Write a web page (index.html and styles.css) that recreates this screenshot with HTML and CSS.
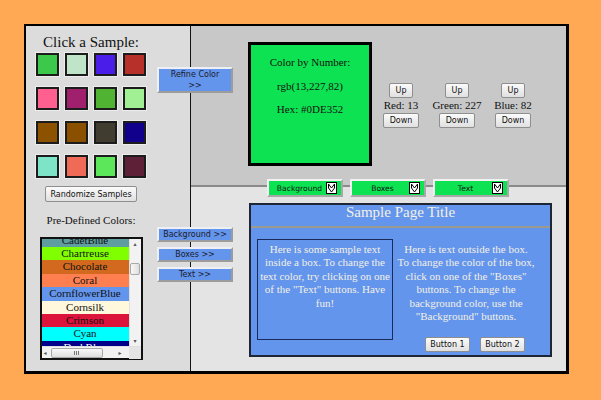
FILE: index.html
```html
<!DOCTYPE html>
<html>
<head>
<meta charset="utf-8">
<link rel="stylesheet" href="styles.css">
</head>
<body>
<div class="frame">
  <aside class="left">
    <div class="left-col">
      <h2 class="heading">Click a Sample:</h2>
      <div class="swatches">
        <div class="swatch" style="background:#3cc84b"></div>
        <div class="swatch" style="background:#c0e4c8"></div>
        <div class="swatch" style="background:#4a1ee8"></div>
        <div class="swatch" style="background:#b8302a"></div>
        <div class="swatch" style="background:#ff6090"></div>
        <div class="swatch" style="background:#a0206e"></div>
        <div class="swatch" style="background:#50b432"></div>
        <div class="swatch" style="background:#a2f094"></div>
        <div class="swatch" style="background:#8c5200"></div>
        <div class="swatch" style="background:#8a5000"></div>
        <div class="swatch" style="background:#403c30"></div>
        <div class="swatch" style="background:#10008c"></div>
        <div class="swatch" style="background:#7ee4c8"></div>
        <div class="swatch" style="background:#f06a58"></div>
        <div class="swatch" style="background:#5ce65a"></div>
        <div class="swatch" style="background:#5e2036"></div>
      </div>
      <button class="btn randomize">Randomize Samples</button>
      <p class="predef">Pre-Defined Colors:</p>
      <div class="listbox">
        <div class="list-main">
          <div class="items">
            <div class="item" style="background:#5f9ea0">CadetBlue</div>
            <div class="item" style="background:#7fff00">Chartreuse</div>
            <div class="item" style="background:#d2691e">Chocolate</div>
            <div class="item" style="background:#ff7f50">Coral</div>
            <div class="item" style="background:#6495ed">CornflowerBlue</div>
            <div class="item" style="background:#fff8dc">Cornsilk</div>
            <div class="item" style="background:#dc143c">Crimson</div>
            <div class="item" style="background:#00ffff">Cyan</div>
            <div class="item item-dark" style="background:#00008b">DarkBlue</div>
          </div>
          <div class="vscroll">
            <span class="arrow">&#9652;</span>
            <span class="vthumb"></span>
            <span class="arrow arrow-down">&#9662;</span>
          </div>
        </div>
        <div class="hscroll">
          <span class="arrow">&#9666;</span>
          <span class="hthumb"><span class="grip"></span></span>
          <span class="arrow arrow-right">&#9656;</span>
          <span class="corner"></span>
        </div>
      </div>
    </div>
  </aside>

  <div class="side-actions">
    <button class="side-btn refine">Refine Color<br>&gt;&gt;</button>
    <div class="side-group">
      <button class="side-btn">Background &gt;&gt;</button>
      <button class="side-btn">Boxes &gt;&gt;</button>
      <button class="side-btn">Text &gt;&gt;</button>
    </div>
  </div>

  <main class="right">
    <section class="top">
      <div class="color-box">
        <p>Color by Number:</p>
        <p>rgb(13,227,82)</p>
        <p>Hex: #0DE352</p>
      </div>
      <div class="channels">
        <div class="channel">
          <button class="btn up">Up</button>
          <span class="ch-label">Red: 13</span>
          <button class="btn down">Down</button>
        </div>
        <div class="channel">
          <button class="btn up">Up</button>
          <span class="ch-label">Green: 227</span>
          <button class="btn down">Down</button>
        </div>
        <div class="channel">
          <button class="btn up">Up</button>
          <span class="ch-label">Blue: 82</span>
          <button class="btn down">Down</button>
        </div>
      </div>
    </section>
    <section class="bottom">
      <div class="selects">
        <div class="select"><span class="sel-text">Background</span><svg class="sel-arrow" width="11" height="12" viewBox="0 0 11 12"><rect x="0.5" y="0.5" width="10" height="11" fill="#fff" stroke="#000"/><polyline points="2.5,2 5.5,6 8.5,2" fill="none" stroke="#000"/><polyline points="2.5,6 5.5,10 8.5,6" fill="none" stroke="#000"/><line x1="2.5" y1="2" x2="2.5" y2="6" stroke="#000"/><line x1="8.5" y1="2" x2="8.5" y2="6" stroke="#000"/></svg></div>
        <div class="select"><span class="sel-text">Boxes</span><svg class="sel-arrow" width="11" height="12" viewBox="0 0 11 12"><rect x="0.5" y="0.5" width="10" height="11" fill="#fff" stroke="#000"/><polyline points="2.5,2 5.5,6 8.5,2" fill="none" stroke="#000"/><polyline points="2.5,6 5.5,10 8.5,6" fill="none" stroke="#000"/><line x1="2.5" y1="2" x2="2.5" y2="6" stroke="#000"/><line x1="8.5" y1="2" x2="8.5" y2="6" stroke="#000"/></svg></div>
        <div class="select"><span class="sel-text">Text</span><svg class="sel-arrow" width="11" height="12" viewBox="0 0 11 12"><rect x="0.5" y="0.5" width="10" height="11" fill="#fff" stroke="#000"/><polyline points="2.5,2 5.5,6 8.5,2" fill="none" stroke="#000"/><polyline points="2.5,6 5.5,10 8.5,6" fill="none" stroke="#000"/><line x1="2.5" y1="2" x2="2.5" y2="6" stroke="#000"/><line x1="8.5" y1="2" x2="8.5" y2="6" stroke="#000"/></svg></div>
      </div>
      <div class="sample">
        <h1 class="sample-title">Sample Page Title</h1>
        <div class="sample-body">
          <div class="sample-box">Here is some sample text inside a box. To change the text color, try clicking on one of the "Text" buttons. Have fun!</div>
          <div class="sample-side">
            <p class="side-text">Here is text outside the box.<br>To change the color of the box,<br>click on one of the "Boxes"<br>buttons. To change the<br>background color, use the<br>"Background" buttons.</p>
            <div class="sample-buttons">
              <button class="btn sbtn">Button 1</button>
              <button class="btn sbtn">Button 2</button>
            </div>
          </div>
        </div>
      </div>
    </section>
  </main>
</div>
</body>
</html>
```

FILE: styles.css
```css
* { box-sizing: border-box; }
html, body { margin: 0; padding: 0; }
body {
  background: #ffa955;
  width: 601px;
  height: 400px;
  overflow: hidden;
  font-family: "Liberation Serif", "Times New Roman", serif;
  color: #111;
}
p, h1, h2 { margin: 0; font-weight: normal; }

.frame {
  position: relative;
  display: flex;
  margin: 24px 0 0 24px;
  width: 545px;
  height: 350px;
  border: 2px solid #000;
  border-right-width: 3px;
  border-bottom-width: 3px;
}

/* left panel */
.left {
  width: 165px;
  height: 100%;
  background: #dcdcdc;
  border-right: 1px solid #141414;
  flex: none;
}
.left-col {
  width: 130px;
  display: flex;
  flex-direction: column;
  align-items: center;
  padding-top: 7px;
}
.heading {
  font-size: 15px;
  line-height: 18px;
  color: #111;
  margin-bottom: 2px;
}
.swatches {
  display: grid;
  grid-template-columns: repeat(4, 23px);
  grid-auto-rows: 23px;
  column-gap: 6px;
  row-gap: 11px;
}
.swatch {
  border: 2px solid #1c1c1c;
  box-shadow: 0 0 0 1px #ededed;
}

.btn {
  font-family: "DejaVu Sans", Verdana, sans-serif;
  font-size: 8px;
  color: #111;
  height: 15px;
  padding: 0;
  border: 1px solid #8e8e8e;
  border-radius: 2px;
  background: linear-gradient(#fbfbfb, #e0e0e0);
  line-height: 13px;
}
.randomize {
  width: 92px;
  height: 16px;
  margin-top: 8px;
}
.predef {
  font-size: 11px;
  line-height: 14px;
  margin-top: 11px;
}

.listbox {
  margin-top: 10px;
  width: 103px;
  height: 123px;
  border: 2px solid #111;
  background: #f0f0f0;
  display: flex;
  flex-direction: column;
}
.list-main {
  display: flex;
  height: 107px;
}
.items {
  width: 87px;
  overflow: hidden;
  background: #fff;
}
.item {
  height: 13.4px;
  line-height: 13.4px;
  font-size: 11px;
  text-align: center;
  color: #111;
}
.item:first-child { margin-top: -5.4px; }
.item-dark { color: #fff; }
.vscroll {
  width: 12px;
  display: flex;
  flex-direction: column;
  align-items: center;
  background: #f2f2f2;
  border-left: 1px solid #e0e0e0;
}
.arrow {
  font-family: "DejaVu Sans", sans-serif;
  font-size: 6px;
  line-height: 10px;
  color: #555;
}
.vthumb {
  margin-top: 14px;
  width: 10px;
  height: 12px;
  border: 1px solid #a8a8a8;
  border-radius: 2px;
  background: linear-gradient(90deg, #f8f8f8, #dedede);
}
.arrow-down { margin-top: auto; }
.hscroll {
  height: 12px;
  display: flex;
  align-items: center;
  background: #f2f2f2;
  border-top: 1px solid #e0e0e0;
  padding-left: 2px;
}
.hthumb {
  margin-left: 4px;
  width: 52px;
  height: 10px;
  border: 1px solid #a8a8a8;
  border-radius: 2px;
  background: linear-gradient(#f8f8f8, #dedede);
  display: flex;
  align-items: center;
  justify-content: center;
}
.grip {
  width: 5px;
  height: 4px;
  background: repeating-linear-gradient(90deg, #777 0 1px, transparent 1px 2px);
}
.arrow-right { margin-left: 16px; }
.corner {
  margin-left: auto;
  width: 12px;
  height: 12px;
  background: #e4e4e4;
}

/* overlay action buttons straddling the divider */
.side-actions {
  position: absolute;
  left: 131px;
  top: 41px;
  width: 76px;
  display: flex;
  flex-direction: column;
  z-index: 2;
}
.side-btn {
  display: block;
  width: 76px;
  height: 15px;
  padding: 0;
  font-family: "DejaVu Sans", Verdana, sans-serif;
  font-size: 8px;
  line-height: 11px;
  color: #1b1b2a;
  background: #6495ed;
  border: 2px solid;
  border-color: #eef0f6 #9c9c9c #9c9c9c #eef0f6;
}
.refine {
  height: 26px;
  line-height: 11px;
}
.side-group {
  margin-top: 134px;
  display: flex;
  flex-direction: column;
  gap: 5px;
}

/* right side */
.right {
  width: 375px;
  display: flex;
  flex-direction: column;
}
.top {
  height: 159px;
  background: #c8c8c8;
  display: flex;
  align-items: flex-start;
  padding: 16px 0 0 57px;
}
.color-box {
  width: 124px;
  height: 124px;
  border: 3px solid #000;
  background: #0de352;
  padding-top: 6px;
  text-align: center;
  font-size: 11px;
  line-height: 23.5px;
}
.channels {
  display: flex;
  margin: 41px 0 0 1px;
}
.channel {
  width: 56px;
  display: flex;
  flex-direction: column;
  align-items: center;
}
.up { width: 24px; }
.down { width: 36px; }
.ch-label {
  font-size: 11px;
  line-height: 15px;
  white-space: nowrap;
}

.bottom {
  flex: 1;
  background: #e4e4e4;
  border-top: 2px solid #8a8a8a;
}
.selects {
  display: flex;
  gap: 7px;
  margin-top: -8px;
  padding-left: 76px;
}
.select {
  width: 76px;
  height: 18px;
  display: flex;
  align-items: center;
  background: #0de352;
  border: 2px solid;
  border-color: #f2f2f2 #a8a8a8 #a8a8a8 #f2f2f2;
  padding-right: 4px;
}
.sel-text {
  flex: 1;
  text-align: center;
  font-family: "DejaVu Sans", Verdana, sans-serif;
  font-size: 7.6px;
  color: #111;
  padding-left: 4px;
}
.sel-arrow { flex: none; display: block; }

.sample {
  margin: 6px 0 0 58px;
  width: 303px;
  height: 154px;
  border: 2px solid #1e2636;
  background: #6495ed;
  color: #f2f0e4;
}
.sample-title {
  font-size: 15px;
  line-height: 15px;
  text-align: center;
  padding: 0 0 6px;
  border-bottom: 2px solid #9c9a8e;
}
.sample-body {
  display: flex;
  padding: 11px 0 0 6px;
  font-size: 11px;
  line-height: 13.4px;
}
.sample-box {
  width: 136px;
  height: 101px;
  border: 1px solid #1a2a5a;
  padding: 3px 2px 0;
  text-align: center;
}
.sample-side {
  width: 140px;
  margin-left: 3px;
  padding-top: 4px;
}
.side-text {
  text-align: center;
  white-space: nowrap;
}
.sample-buttons {
  display: flex;
  justify-content: flex-end;
  gap: 10px;
  padding-right: 11px;
  margin-top: 14px;
}
.sbtn { width: 45px; height: 15px; }
```
